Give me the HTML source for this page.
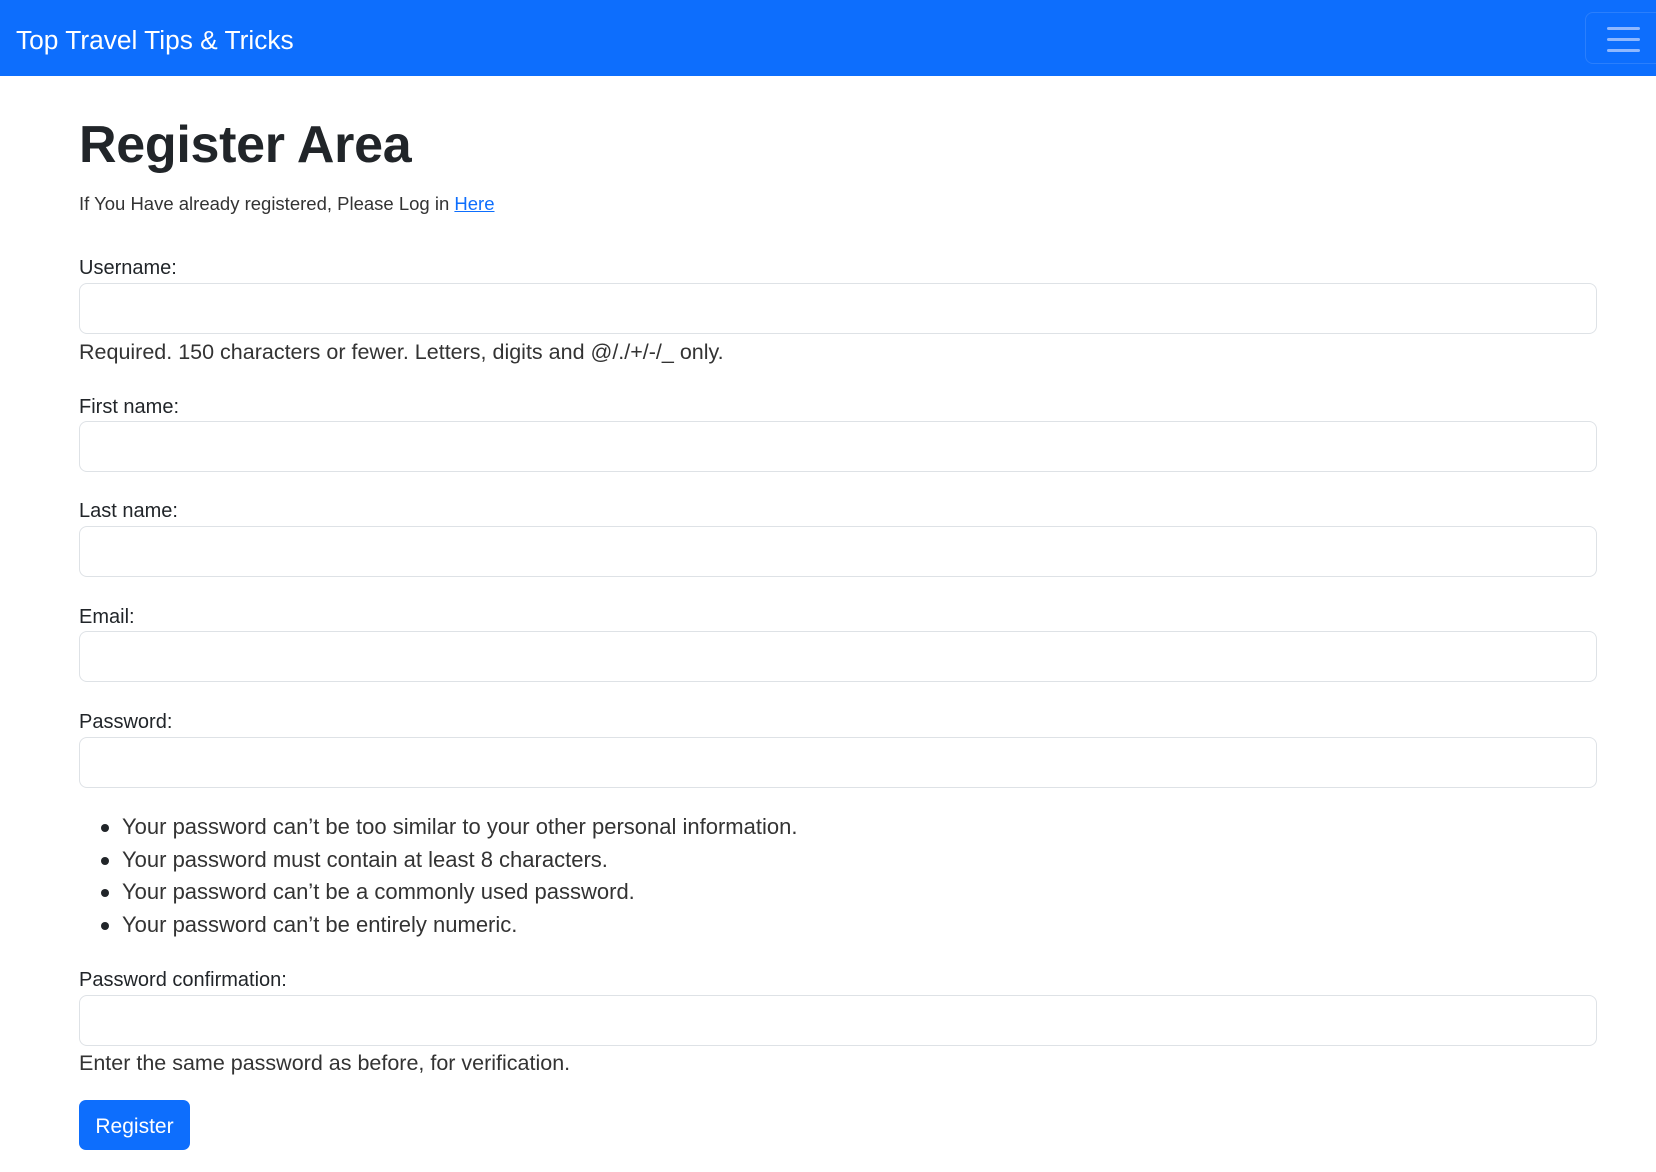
<!DOCTYPE html>
<html><head><meta charset="utf-8"><style>
body{margin:0;width:1656px;height:1172px;background:#fff;font-family:"Liberation Sans",sans-serif;color:#212529;position:relative;overflow:hidden}
.nav{position:absolute;left:0;top:0;width:1656px;height:76px;background:#0d6efd}
.brand{position:absolute;left:16px;top:23px;font-size:26.3px;color:#fff;line-height:34px}
.tog{position:absolute;left:1585px;top:12px;width:80px;height:52px;border:1px solid rgba(255,255,255,.12);border-radius:8px;box-sizing:border-box}
.tog i{position:absolute;left:21px;width:33px;height:3px;border-radius:2px;background:#8fb8ff}
.a{position:absolute;left:79px;white-space:nowrap}
.lbl{font-size:20px;line-height:24px}
.inp{position:absolute;left:79px;width:1518px;height:51px;border:1px solid #dee2e6;border-radius:8px;box-sizing:border-box}
.help{font-size:21.5px;line-height:26px;color:#333}
h1{margin:0;position:absolute;left:79px;top:113px;font-size:52px;line-height:64px;font-weight:bold;letter-spacing:-0.3px}
ul{position:absolute;left:79px;top:811px;margin:0;padding-left:43px;font-size:22px;line-height:32.7px;color:#333;list-style:none}
ul li{position:relative}
ul li:before{content:"";position:absolute;left:-21px;top:13px;width:8px;height:8px;border-radius:50%;background:#212529}
.btn{position:absolute;left:79px;top:1100px;width:111px;height:50px;background:#0d6efd;color:#fff;border-radius:7px;font-size:21px;line-height:54px;text-align:center}
</style></head><body>
<div class="nav"><div class="brand">Top Travel Tips &amp; Tricks</div>
<div class="tog"><i style="top:14px"></i><i style="top:25px"></i><i style="top:36px"></i></div></div>
<h1>Register Area</h1>
<div class="a" style="top:192px;font-size:18.5px;line-height:24px;color:#333">If You Have already registered, Please Log in <span style="color:#0d6efd;text-decoration:underline">Here</span></div>
<div class="a lbl" style="top:256px">Username:</div>
<div class="inp" style="top:283px"></div>
<div class="a help" style="top:339px">Required. 150 characters or fewer. Letters, digits and @/./+/-/_ only.</div>
<div class="a lbl" style="top:395px">First name:</div>
<div class="inp" style="top:421px"></div>
<div class="a lbl" style="top:499px">Last name:</div>
<div class="inp" style="top:526px"></div>
<div class="a lbl" style="top:605px">Email:</div>
<div class="inp" style="top:631px"></div>
<div class="a lbl" style="top:710px">Password:</div>
<div class="inp" style="top:737px"></div>
<ul><li>Your password can’t be too similar to your other personal information.</li><li>Your password must contain at least 8 characters.</li><li>Your password can’t be a commonly used password.</li><li>Your password can’t be entirely numeric.</li></ul>
<div class="a lbl" style="top:968px">Password confirmation:</div>
<div class="inp" style="top:995px"></div>
<div class="a help" style="top:1050px">Enter the same password as before, for verification.</div>
<div class="btn">Register</div>
</body></html>
